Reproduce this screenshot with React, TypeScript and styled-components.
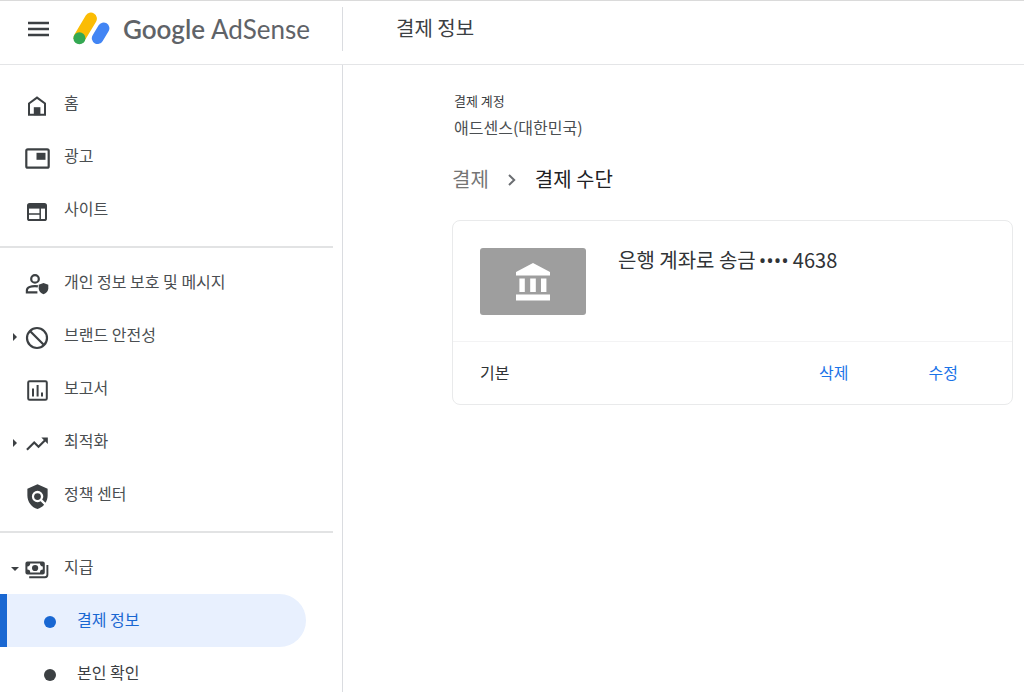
import React from "react";
import styled, { createGlobalStyle } from "styled-components";
import { MdPolicy, MdTrendingUp } from "react-icons/md";

const GlobalStyle = createGlobalStyle`
  *, *::before, *::after { box-sizing: border-box; }
  body {
    margin: 0;
    background: #fff;
    color: #3c4043;
    font-family: "Noto Sans CJK KR", "Noto Sans", sans-serif;
    font-size: 16px;
    line-height: 24px;
  }
  html, body { overflow: hidden; }
`;

const Page = styled.div`
  min-height: 100vh;
  display: flex;
  flex-direction: column;
`;

const Header = styled.header`
  display: flex;
  align-items: flex-start;
  height: 65px;
  border-top: 1px solid #dadada;
  border-bottom: 1px solid #e4e5e7;
`;

const Brand = styled.div`
  display: flex;
  align-items: center;
  flex: none;
  width: 343px;
  height: 44px;
  margin-top: 6px;
  padding-left: 28px;
  border-right: 1px solid #dadce0;
`;

const MenuButton = styled.button`
  display: flex;
  width: 21px;
  padding: 0;
  border: 0;
  background: none;
  color: #3c4043;
  cursor: pointer;
`;

const Logo = styled.a`
  display: flex;
  align-items: center;
  gap: 12px;
  margin-left: 23px;
  color: #5f6368;
  font-family: Lato, sans-serif;
  font-size: 26px;
  line-height: 32px;
  text-decoration: none;
  white-space: nowrap;
`;

const LogoStrong = styled.span`
  font-weight: 600;
`;

const PageTitle = styled.h1`
  margin: 13px 0 0 53px;
  color: #3c4043;
  font-size: 20px;
  font-weight: 400;
  line-height: 28px;
`;

const Body = styled.div`
  display: flex;
  flex: 1;
`;

const Sidebar = styled.nav`
  flex: none;
  width: 343px;
  height: calc(100vh - 65px);
  overflow: hidden;
  padding-top: 4px;
  border-right: 1px solid #dadce0;
`;

const NavGroup = styled.ul`
  margin: 0 9px 0 0;
  padding: 8px 0 10px;
  list-style: none;

  & + & {
    border-top: 2px solid #e2e3e4;
  }
`;

const NavLink = styled.a`
  display: grid;
  grid-template-columns: 23px 28px 1fr;
  align-items: center;
  height: 53px;
  color: #3c4043;
  text-decoration: none;
`;

const Arrow = styled.span`
  display: flex;
  justify-content: center;
  padding: 2px 0 0 6px;
`;

const IconSlot = styled.span`
  display: flex;
  justify-content: center;
  padding-top: 4px;
`;

const NavLabel = styled.span`
  padding: 0 0 4px 13px;
  color: #4a4e51;
  white-space: nowrap;
`;

const SubLink = styled.a<{ $active?: boolean }>`
  display: flex;
  align-items: center;
  gap: 21px;
  height: 53px;
  margin-right: 27px;
  padding-left: ${(p) => (p.$active ? 37 : 44)}px;
  border-left: ${(p) => (p.$active ? "7px solid #1967d2" : "0")};
  border-radius: 0 27px 27px 0;
  background: ${(p) => (p.$active ? "#e8f0fe" : "transparent")};
  color: ${(p) => (p.$active ? "#1967d2" : "#3c4043")};
  text-decoration: none;
`;

const Dot = styled.span`
  width: 12px;
  height: 12px;
  margin-top: 2px;
  border-radius: 50%;
  background: currentColor;
`;

const SubLabel = styled.span`
  padding-bottom: 4px;
`;

const Main = styled.main`
  flex: 1;
  min-width: 0;
  padding: 26px 11px 0 109px;
`;

const Account = styled.div`
  padding-left: 2px;
`;

const AccountLabel = styled.div`
  font-size: 13px;
  line-height: 20px;
`;

const AccountName = styled.div`
  margin-top: 4px;
  color: #4a4e51;
`;

const Breadcrumb = styled.nav`
  display: flex;
  align-items: center;
  margin-top: 26px;
  font-size: 20px;
  line-height: 28px;
`;

const CrumbLink = styled.a`
  color: #757575;
  text-decoration: none;
`;

const CrumbArrow = styled.span`
  display: flex;
  margin: 2px 18px 0;
`;

const CrumbCurrent = styled.span`
  color: #202124;
`;

const Card = styled.section`
  margin-top: 27px;
  border: 1px solid #e9eaeb;
  border-radius: 8px;
`;

const Method = styled.div`
  display: flex;
  gap: 32px;
  padding: 27px 27px 26px;
  border-bottom: 1px solid #f3f3f4;
`;

const BankTile = styled.div`
  display: flex;
  align-items: center;
  justify-content: center;
  width: 106px;
  height: 67px;
  border-radius: 3px;
  background: #9e9e9e;
`;

const MethodName = styled.h2`
  margin: 0;
  color: #303336;
  font-size: 20px;
  font-weight: 400;
  line-height: 24px;
`;

const Mask = styled.span`
  margin: 0 4px 0 3px;
  font-family: "Open Sans", sans-serif;
`;

const CardFooter = styled.div`
  display: flex;
  align-items: center;
  height: 62px;
  padding: 0 54px 2px 27px;
`;

const DefaultTag = styled.span`
  flex: 1;
  color: #303336;
`;

const Actions = styled.div`
  display: flex;
  gap: 80px;
`;

const TextButton = styled.button`
  padding: 0;
  border: 0;
  background: none;
  color: #1a73e8;
  font: inherit;
  cursor: pointer;
`;

const MenuIcon = () => (
  <svg width="21" height="16" viewBox="0 0 21 16" aria-hidden="true">
    <path d="M0 2h21M0 8h21M0 14h21" stroke="currentColor" strokeWidth="2.6" />
  </svg>
);

const AdSenseMark = () => (
  <svg width="39" height="38" viewBox="0 0 39 38" aria-hidden="true">
    <path d="M7.6 27.500 18.900 8.600" stroke="#fbbc04" strokeWidth="12" strokeLinecap="round" />
    <path d="M25.600 28.200 31.600 18.300" stroke="#4285f4" strokeWidth="11.600" strokeLinecap="round" />
    <circle cx="7.400" cy="28.300" r="6" fill="#34a853" />
  </svg>
);

const HomeIcon = () => (
  <svg width="20" height="20" viewBox="0 0 20 20" aria-hidden="true">
    <path d="M2 7.5 10 1.6l8 5.9V18.7H2z" fill="none" stroke="currentColor" strokeWidth="2" />
    <path d="M6.8 11.2h6.6v8H6.8z" fill="currentColor" />
  </svg>
);

const AdsIcon = () => (
  <svg width="25" height="21" viewBox="0 0 25 21" aria-hidden="true">
    <rect x="1.3" y="1.3" width="22.4" height="18.4" rx="1.5" fill="none" stroke="currentColor" strokeWidth="2.2" />
    <path d="M11.5 4.8h9v7h-9z" fill="currentColor" />
  </svg>
);

const SitesIcon = () => (
  <svg width="20" height="18" viewBox="0 0 20 18" aria-hidden="true">
    <rect x="1" y="1" width="18" height="16" rx="1.6" fill="none" stroke="currentColor" strokeWidth="2" />
    <path d="M1 1h18v4.6H1z" fill="currentColor" />
    <path d="M1.5 10.9H13M13.2 5v12" fill="none" stroke="currentColor" strokeWidth="1.5" />
  </svg>
);

const PrivacyIcon = () => (
  <svg width="24" height="22" viewBox="0 0 24 22" aria-hidden="true">
    <circle cx="10" cy="4.900" r="3.8" fill="none" stroke="currentColor" strokeWidth="2.2" />
    <path
      d="M12.4 18.300H1.900v-2c0-3 4.600-4.200 8.100-4.200 1 0 2 .1 2.900.3"
      fill="none"
      stroke="currentColor"
      strokeWidth="2.2"
    />
    <path d="M18.5 8.900 23.3 10.700v3.600c0 2.900-2 5-4.800 6-2.800-1-4.800-3.100-4.800-6v-3.600z" fill="currentColor" />
  </svg>
);

const BlockIcon = () => (
  <svg width="24" height="24" viewBox="0 0 24 24" aria-hidden="true">
    <circle cx="12" cy="12" r="10" fill="none" stroke="currentColor" strokeWidth="2.200" />
    <path d="M5 5l14 14" stroke="currentColor" strokeWidth="2.200" />
  </svg>
);

const ReportIcon = () => (
  <svg width="21" height="21" viewBox="0 0 21 21" aria-hidden="true">
    <rect x="1.2" y="1.2" width="18.6" height="18.6" rx="1.4" fill="none" stroke="currentColor" strokeWidth="2" />
    <path d="M6 8.4v8M10.6 5v11.4M15 12.4v4" stroke="currentColor" strokeWidth="2" />
  </svg>
);

const PaymentsIcon = () => (
  <svg width="24" height="18" viewBox="0 0 24 18" aria-hidden="true">
    <path
      fillRule="evenodd"
      fill="currentColor"
      d="M2.4.6h15.4a2 2 0 0 1 2 2v8.8a2 2 0 0 1-2 2H2.4a2 2 0 0 1-2-2V2.6a2 2 0 0 1 2-2zM5.2 2.6a2.8 2.8 0 0 1-2.8 2.8v3.2a2.8 2.8 0 0 1 2.8 2.8h9.8a2.8 2.8 0 0 1 2.8-2.8V5.4A2.8 2.8 0 0 1 15 2.6z"
    />
    <circle cx="10.1" cy="7" r="3.1" fill="currentColor" />
    <path d="M4.2 16.2H20a2.4 2.4 0 0 0 2.4-2.4V4" fill="none" stroke="currentColor" strokeWidth="1.9" />
  </svg>
);

const ArrowRight = () => (
  <svg width="4" height="8" viewBox="0 0 4 8" aria-hidden="true">
    <path d="M0 0l4 4-4 4z" fill="currentColor" />
  </svg>
);

const ArrowDown = () => (
  <svg width="8" height="4" viewBox="0 0 8 4" aria-hidden="true">
    <path d="M0 0h8L4 4z" fill="currentColor" />
  </svg>
);

const ChevronIcon = () => (
  <svg width="10" height="12" viewBox="0 0 10 12" aria-hidden="true">
    <path d="M2 1l5.2 5L2 11" fill="none" stroke="#6b6e72" strokeWidth="2" />
  </svg>
);

const BankIcon = () => (
  <svg width="34" height="38" viewBox="0 0 34 38" aria-hidden="true">
    <path
      fill="#fff"
      d="M17 0 34 8.900V12.500H0V8.900zM3.400 15.500h5.400v13.400H3.400zM14.200 15.500h5.600v13.400h-5.600zM25 15.500h5.400v13.400H25zM0 31.500h34v6H0z"
    />
  </svg>
);

type Item = { label: string; icon: React.ReactNode; arrow?: "right" | "down" };

const mainItems: Item[] = [
  { label: "홈", icon: <HomeIcon /> },
  { label: "광고", icon: <AdsIcon /> },
  { label: "사이트", icon: <SitesIcon /> },
];

const toolItems: Item[] = [
  { label: "개인 정보 보호 및 메시지", icon: <PrivacyIcon /> },
  { label: "브랜드 안전성", icon: <BlockIcon />, arrow: "right" },
  { label: "보고서", icon: <ReportIcon /> },
  { label: "최적화", icon: <MdTrendingUp size={26} />, arrow: "right" },
  { label: "정책 센터", icon: <MdPolicy size={27} /> },
];

const NavItem = ({ label, icon, arrow }: Item) => (
  <li>
    <NavLink href="#">
      <Arrow>
        {arrow === "right" && <ArrowRight />}
        {arrow === "down" && <ArrowDown />}
      </Arrow>
      <IconSlot>{icon}</IconSlot>
      <NavLabel>{label}</NavLabel>
    </NavLink>
  </li>
);

export default function App() {
  return (
    <Page>
      <GlobalStyle />
      <Header>
        <Brand>
          <MenuButton type="button" aria-label="메뉴">
            <MenuIcon />
          </MenuButton>
          <Logo href="#">
            <AdSenseMark />
            <span>
              <LogoStrong>Google</LogoStrong> AdSense
            </span>
          </Logo>
        </Brand>
        <PageTitle>결제 정보</PageTitle>
      </Header>
      <Body>
        <Sidebar>
          <NavGroup>
            {mainItems.map((item) => (
              <NavItem key={item.label} {...item} />
            ))}
          </NavGroup>
          <NavGroup>
            {toolItems.map((item) => (
              <NavItem key={item.label} {...item} />
            ))}
          </NavGroup>
          <NavGroup>
            <NavItem label="지급" icon={<PaymentsIcon />} arrow="down" />
            <li>
              <SubLink href="#" $active aria-current="page">
                <Dot />
                <SubLabel>결제 정보</SubLabel>
              </SubLink>
            </li>
            <li>
              <SubLink href="#">
                <Dot />
                <SubLabel>본인 확인</SubLabel>
              </SubLink>
            </li>
          </NavGroup>
        </Sidebar>
        <Main>
          <Account>
            <AccountLabel>결제 계정</AccountLabel>
            <AccountName>애드센스(대한민국)</AccountName>
          </Account>
          <Breadcrumb>
            <CrumbLink href="#">결제</CrumbLink>
            <CrumbArrow>
              <ChevronIcon />
            </CrumbArrow>
            <CrumbCurrent>결제 수단</CrumbCurrent>
          </Breadcrumb>
          <Card>
            <Method>
              <BankTile>
                <BankIcon />
              </BankTile>
              <MethodName>
                은행 계좌로 송금<Mask>••••</Mask>4638
              </MethodName>
            </Method>
            <CardFooter>
              <DefaultTag>기본</DefaultTag>
              <Actions>
                <TextButton type="button">삭제</TextButton>
                <TextButton type="button">수정</TextButton>
              </Actions>
            </CardFooter>
          </Card>
        </Main>
      </Body>
    </Page>
  );
}
